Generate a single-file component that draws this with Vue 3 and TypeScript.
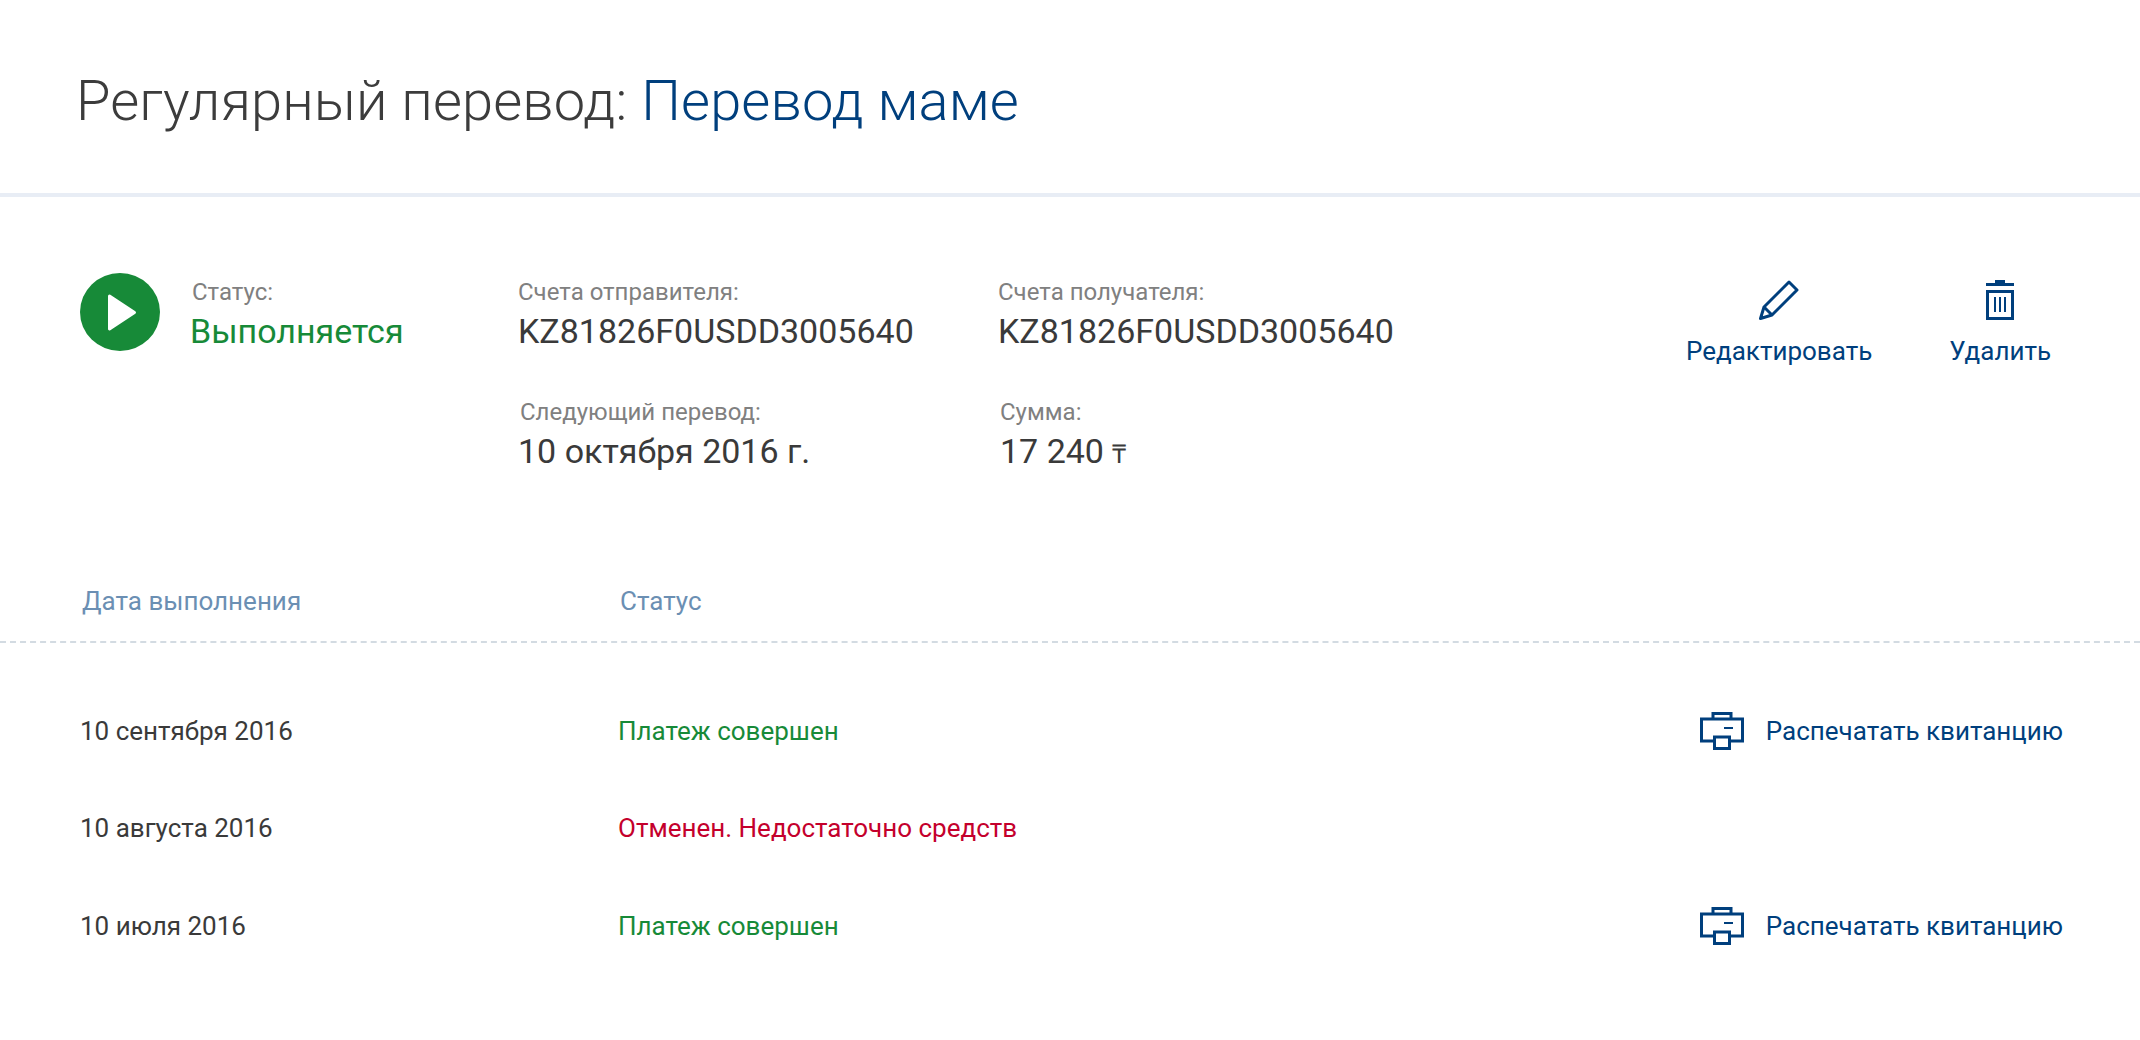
<script setup lang="ts">
interface Row { date: string; status: string; ok: boolean }
const rows: Row[] = [
  { date: '10 сентября 2016', status: 'Платеж совершен', ok: true },
  { date: '10 августа 2016', status: 'Отменен. Недостаточно средств', ok: false },
  { date: '10 июля 2016', status: 'Платеж совершен', ok: true },
]
</script>

<template>
  <div class="page">
    <header class="head">
      <h1 class="title">Регулярный перевод: <span class="name">Перевод маме</span></h1>
    </header>

    <section class="summary">
      <div class="state">
        <svg class="play" width="80" height="80" viewBox="0 0 80 80">
          <ellipse cx="40" cy="39" rx="40" ry="39" fill="#178a38" />
          <path d="M29.5 23 L54.5 39.5 L29.5 56 Z" fill="#fff" stroke="#fff" stroke-width="3" stroke-linejoin="round" />
        </svg>
        <div class="state-text">
          <div class="label shift">Статус:</div>
          <div class="value green">Выполняется</div>
        </div>
      </div>

      <div class="details">
        <div class="field">
          <div class="label">Счета отправителя:</div>
          <div class="value">KZ81826F0USDD3005640</div>
        </div>
        <div class="field">
          <div class="label">Счета получателя:</div>
          <div class="value">KZ81826F0USDD3005640</div>
        </div>
        <div class="field">
          <div class="label shift">Следующий перевод:</div>
          <div class="value">10 октября 2016 г.</div>
        </div>
        <div class="field shift">
          <div class="label">Сумма:</div>
          <div class="value">17 240 <span class="cur">₸</span></div>
        </div>
      </div>

      <div class="actions">
        <a class="action edit">
          <svg width="40" height="40" viewBox="0 0 40 40" fill="none" stroke="#003f7d" stroke-width="3" stroke-linejoin="round">
            <path d="M30 2 L38 10 L13 35 L1.5 38.5 L5 27 Z" />
            <path d="M5 27 L13 35" />
          </svg>
          <span>Редактировать</span>
        </a>
        <a class="action del">
          <svg width="28" height="40" viewBox="0 0 28 40" fill="none" stroke="#003f7d">
            <path d="M0 4.5 H28" stroke-width="3" />
            <path d="M9 1.5 H19" stroke-width="3" />
            <rect x="1.5" y="11.5" width="25" height="27" stroke-width="3" />
            <path d="M9 17 V32 M14 17 V32 M19 17 V32" stroke-width="2" />
          </svg>
          <span>Удалить</span>
        </a>
      </div>
    </section>

    <section class="history">
      <div class="thead">
        <div class="c1">Дата выполнения</div>
        <div class="c2">Статус</div>
      </div>
      <div class="tbody">
        <div v-for="(r, i) in rows" :key="i" class="row">
          <div class="c1">{{ r.date }}</div>
          <div class="c2" :class="r.ok ? 'green' : 'red'">{{ r.status }}</div>
          <a v-if="r.ok" class="print">
            <svg width="44" height="38" viewBox="0 0 44 38" fill="none" stroke="#003f7d" stroke-width="3">
              <path d="M14 29 H1.5 V7 H42.5 V29 H30" />
              <path d="M13 7 V1.5 H31 V7" />
              <rect x="14.5" y="25" width="15" height="11.5" />
              <path d="M24 16 H33" stroke-width="2" />
            </svg>
            <span>Распечатать квитанцию</span>
          </a>
        </div>
      </div>
    </section>
  </div>
</template>

<style>
html, body { margin: 0; background: #fff; }
</style>

<style scoped>
.page {
  width: 2140px;
  height: 1040px;
  background: #fff;
  font-family: Roboto, "Liberation Sans", sans-serif;
  color: #3a3a3a;
  overflow: hidden;
}
.head {
  height: 193px;
  border-bottom: 4px solid #e8edf5;
  padding-left: 76px;
}
.title {
  margin: 0;
  padding-top: 61px;
  font-size: 56px;
  line-height: 80px;
  font-weight: 300;
  letter-spacing: 0.13px;
  color: #3c3c3c;
}
.name { color: #003f7d; }
.summary {
  display: flex;
  padding: 76px 0 0 80px;
  height: 330px;
  box-sizing: border-box;
}
.state { display: flex; width: 438px; }
.play { flex: none; }
.state-text { margin-left: 30px; }
.label {
  font-size: 24px;
  line-height: 28px;
  color: #808080;
  padding-top: 5px;
  white-space: nowrap;
}
.shift { margin-left: 2px; }
.value {
  font-size: 34px;
  line-height: 42px;
  color: #3a3a3a;
  margin-top: 4px;
  white-space: nowrap;
}
.value.green { color: #178a38; }
.details {
  display: grid;
  grid-template-columns: 480px 480px;
  grid-auto-rows: 120px;
  width: 1130px;
  flex: none;
}
.cur { font-size: 26px; }
.actions { display: flex; }
.action {
  display: flex;
  flex-direction: column;
  align-items: center;
  color: #003f7d;
  font-size: 26px;
  line-height: 34px;
  white-space: nowrap;
}
.action svg { margin-top: 7px; margin-bottom: 14px; }
.edit { margin-left: 38px; }
.del { margin-left: 77px; }
.thead {
  display: flex;
  align-items: center;
  height: 116px;
  padding: 34px 0 0 82px;
  box-sizing: border-box;
  border-bottom: 2px dashed #d3dbe2;
  color: #6b8fb3;
  font-size: 26px;
}
.tbody { padding-top: 39px; }
.c1 { width: 538px; flex: none; }
.row {
  display: flex;
  align-items: center;
  height: 97.5px;
  padding-left: 80px;
  font-size: 26px;
  color: #3a3a3a;
}
.green { color: #178a38; }
.red { color: #c4002c; }
.print {
  display: flex;
  align-items: center;
  margin-left: auto;
  margin-right: 77px;
  color: #003f7d;
}
.print svg { margin-right: 22px; }
</style>
